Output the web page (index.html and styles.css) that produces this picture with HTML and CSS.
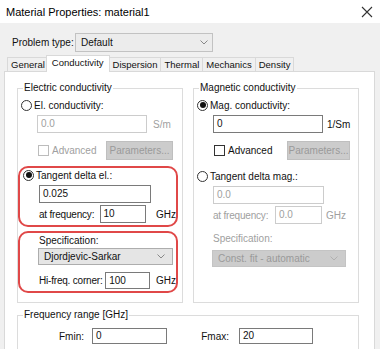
FILE: index.html
```html
<!DOCTYPE html>
<html lang="en">
<head>
    <meta charset="UTF-8">
    <title>Material Properties: material1</title>
    <link rel="stylesheet" href="styles.css">
</head>
<body>

    <!-- Title bar -->
    <div class="titlebar">
        <span class="title">Material Properties: material1</span>
        <svg class="close" width="12" height="12" viewBox="0 0 12 12">
            <path d="M1 1 L11 11 M11 1 L1 11" stroke="#333" stroke-width="1.1" fill="none"/>
        </svg>
    </div>

    <!-- Problem type -->
    <div class="problem-row">
        <span class="problem-label">Problem type:</span>
        <div class="combo problem-combo">
            <span>Default</span>
            <svg class="chevron" width="8" height="5" viewBox="0 0 8 5"><path d="M0.5 0.5 L4 4 L7.5 0.5" stroke="#888" fill="none"/></svg>
        </div>
    </div>

    <!-- Tabs -->
    <div class="tabs">
        <span class="tab">General</span>
        <span class="tab active">Conductivity</span>
        <span class="tab">Dispersion</span>
        <span class="tab">Thermal</span>
        <span class="tab">Mechanics</span>
        <span class="tab">Density</span>
    </div>

    <div class="panel">
        <div class="columns">

            <!-- Electric conductivity -->
            <fieldset class="group">
                <legend>Electric conductivity</legend>
                <div class="opt first">
                    <span class="radio"></span>
                    <span>El. conductivity:</span>
                </div>
                <div class="field-row indent">
                    <span class="input disabled w110">0.0</span>
                    <span class="unit muted">S/m</span>
                </div>
                <div class="adv-row">
                    <span class="check disabled"></span>
                    <span class="check-label muted">Advanced</span>
                    <span class="button disabled">Parameters...</span>
                </div>

                <div class="mark mark-top">
                    <div class="opt">
                        <span class="radio on"></span>
                        <span>Tangent delta el.:</span>
                    </div>
                    <div class="field-row indent">
                        <span class="input w112">0.025</span>
                    </div>
                    <div class="field-row indent freq-row">
                        <span class="field-label lbl63">at frequency:</span>
                        <span class="input w48">10</span>
                        <span class="unit ghz">GHz</span>
                    </div>
                </div>

                <div class="mark mark-bottom">
                    <div class="field-row indent spec-label">Specification:</div>
                    <div class="combo spec-combo">
                        <span>Djordjevic-Sarkar</span>
                        <svg class="chevron" width="8" height="5" viewBox="0 0 8 5"><path d="M0.5 0.5 L4 4 L7.5 0.5" stroke="#888" fill="none"/></svg>
                    </div>
                    <div class="field-row indent corner-row">
                        <span class="field-label lbl70">Hi-freq. corner:</span>
                        <span class="input w47">100</span>
                        <span class="unit">GHz</span>
                    </div>
                </div>
            </fieldset>

            <!-- Magnetic conductivity -->
            <fieldset class="group">
                <legend>Magnetic conductivity</legend>
                <div class="opt first">
                    <span class="radio on"></span>
                    <span>Mag. conductivity:</span>
                </div>
                <div class="field-row indent">
                    <span class="input w110">0</span>
                    <span class="unit near">1/Sm</span>
                </div>
                <div class="adv-row">
                    <span class="check"></span>
                    <span class="check-label wide">Advanced</span>
                    <span class="button disabled narrow">Parameters...</span>
                </div>
                <div class="opt tan-mag">
                    <span class="radio"></span>
                    <span>Tangent delta mag.:</span>
                </div>
                <div class="field-row indent">
                    <span class="input disabled w111">0.0</span>
                </div>
                <div class="field-row indent freq-row muted">
                    <span class="field-label lbl62">at frequency:</span>
                    <span class="input disabled w47">0.0</span>
                    <span class="unit near">GHz</span>
                </div>
                <div class="field-row indent spec-label muted mag-spec">Specification:</div>
                <div class="combo disabled mag-combo">
                    <span>Const. fit - automatic</span>
                    <svg class="chevron" width="8" height="5" viewBox="0 0 8 5"><path d="M0.5 0.5 L4 4 L7.5 0.5" stroke="#b0b0b0" fill="none"/></svg>
                </div>
            </fieldset>
        </div>

        <!-- Frequency range -->
        <fieldset class="group freq-group">
            <legend>Frequency range [GHz]</legend>
            <div class="range-row">
                <span class="range-label fmin">Fmin:</span>
                <span class="input w75">0</span>
                <span class="range-label fmax">Fmax:</span>
                <span class="input w74">20</span>
            </div>
        </fieldset>
    </div>

</body>
</html>
```

FILE: styles.css
```css
* {
    box-sizing: border-box;
}
html {
    overflow: hidden;
}
body {
    margin: 0;
    width: 380px;
    height: 349px;
    overflow: hidden;
    background-color: #f0f0f0;
    color: #111;
    font-family: 'Liberation Sans', Arial, sans-serif;
    font-size: 10px;
    white-space: nowrap;
}
.titlebar {
    height: 23px;
    background-color: #fff;
    display: flex;
    align-items: center;
    justify-content: space-between;
    padding: 0 7px 0 6px;
}
.title {
    font-size: 11px;
    color: #000;
}
.problem-row {
    display: flex;
    align-items: center;
    height: 19px;
    margin-top: 10px;
    padding-left: 12px;
}
.problem-label {
    width: 63px;
}
.combo {
    display: flex;
    align-items: center;
    justify-content: space-between;
    height: 18px;
    padding: 0 7px 0 5px;
    border: 1px solid #adadad;
    background-color: #e5e5e5;
}
.problem-combo {
    width: 138px;
    height: 19px;
    background-color: #ececec;
    border-color: #c2c2c2;
    padding-right: 4px;
}
.combo.disabled {
    background-color: #cccccc;
    border-color: #c4c4c4;
    color: #9a9a9a;
}
.tabs {
    display: flex;
    align-items: flex-end;
    height: 16px;
    margin-top: 3px;
    padding-left: 7px;
    position: relative;
    z-index: 1;
    font-size: 9.5px;
}
.tab {
    height: 14px;
    padding: 0 3px;
    line-height: 13px;
    border: 1px solid #d9d9d9;
    border-bottom: none;
    margin-right: -1px;
    background-color: #f0f0f0;
}
.tab.active {
    height: 17px;
    margin: 0 -1px -1px -2px;
    padding: 0 5px;
    line-height: 14px;
    background-color: #fff;
    position: relative;
}
.panel {
    margin: 0 5px 0 4px;
    height: 280px;
    background-color: #fff;
    border: 1px solid #d9d9d9;
    padding: 10px 0 0 12px;
}
.columns {
    display: grid;
    grid-template-columns: 166px 166px;
    gap: 10px;
}
.group {
    margin: 0;
    padding: 0 0 9px 3px;
    border: 1px solid #dcdcdc;
    min-width: 0;
}
.group legend {
    padding: 0 1px;
    margin-left: 2px;
    line-height: 12px;
}
.opt {
    display: flex;
    align-items: center;
    height: 14px;
}
.opt.first {
    margin-top: 4px;
}
.radio {
    width: 11px;
    height: 11px;
    border: 1px solid #333;
    border-radius: 50%;
    margin-right: 2px;
    display: flex;
    align-items: center;
    justify-content: center;
    background-color: #fff;
}
.radio.on::after {
    content: "";
    width: 6px;
    height: 6px;
    border-radius: 50%;
    background-color: #111;
}
.field-row {
    display: flex;
    align-items: center;
    margin-top: 3px;
}
.indent {
    padding-left: 16px;
}
.input {
    height: 18px;
    line-height: 16px;
    padding: 0 3px;
    border: 1px solid #7a7a7a;
    background-color: #fff;
}
.input.disabled {
    border-color: #cccccc;
    color: #a0a0a0;
}
.w110 { width: 110px; }
.w111 { width: 111px; }
.w112 { width: 112px; }
.w48 { width: 48px; }
.w47 { width: 47px; }
.w75 { width: 75px; }
.w74 { width: 74px; }
.unit {
    margin-left: 6px;
}
.unit.ghz {
    margin-left: 10px;
}
.unit.near {
    margin-left: 4px;
}
.muted {
    color: #a0a0a0;
}
.adv-row {
    display: flex;
    align-items: center;
    height: 19px;
    margin-top: 8px;
    padding-left: 17px;
}
.check {
    width: 11px;
    height: 11px;
    border: 1px solid #333;
    background-color: #fff;
}
.check.disabled {
    border-color: #bcbcbc;
}
.check-label {
    width: 57px;
    padding-left: 3px;
}
.check-label.wide {
    width: 62px;
}
.button {
    height: 19px;
    width: 67px;
    line-height: 17px;
    text-align: center;
    border: 1px solid #bfbfbf;
    background-color: #cccccc;
}
.button.disabled {
    color: #9a9a9a;
}
.button.narrow {
    width: 63px;
}

/* red highlight frames */
.mark {
    border: 2px solid #e04848;
    border-radius: 10px;
    margin-left: -3px;
    width: 160px;
    padding-left: 3px;
}
.mark-top {
    margin-top: 6px;
    height: 61px;
}
.mark-bottom {
    margin-top: 4px;
    height: 62px;
}
.field-label {
    display: inline-block;
    letter-spacing: -0.2px;
}
.lbl63 { width: 63px; }
.lbl62 { width: 62px; }
.lbl70 { width: 70px; }
.freq-row {
    margin-top: 2px;
}
.spec-label {
    height: 14px;
    margin-top: 0;
}
.spec-combo {
    width: 135px;
    height: 17px;
    margin: 1px 0 0 15px;
}
.corner-row {
    margin-top: 7px;
}
.corner-row .input {
    height: 17px;
    line-height: 15px;
}
.tan-mag {
    margin-top: 9px;
}
.mag-spec {
    margin-top: 7px;
}
.mag-combo {
    width: 134px;
    height: 17px;
    margin: 5px 0 0 15px;
}
.freq-group {
    width: 342px;
    margin-top: 6px;
    height: 60px;
}
.range-row {
    display: flex;
    align-items: center;
    margin-top: 7px;
}
.range-row .input {
    height: 16px;
    line-height: 14px;
}
.range-label {
    text-align: right;
}
.fmin {
    width: 63px;
    margin-right: 8px;
}
.fmax {
    width: 62px;
    margin-right: 10px;
}
```
